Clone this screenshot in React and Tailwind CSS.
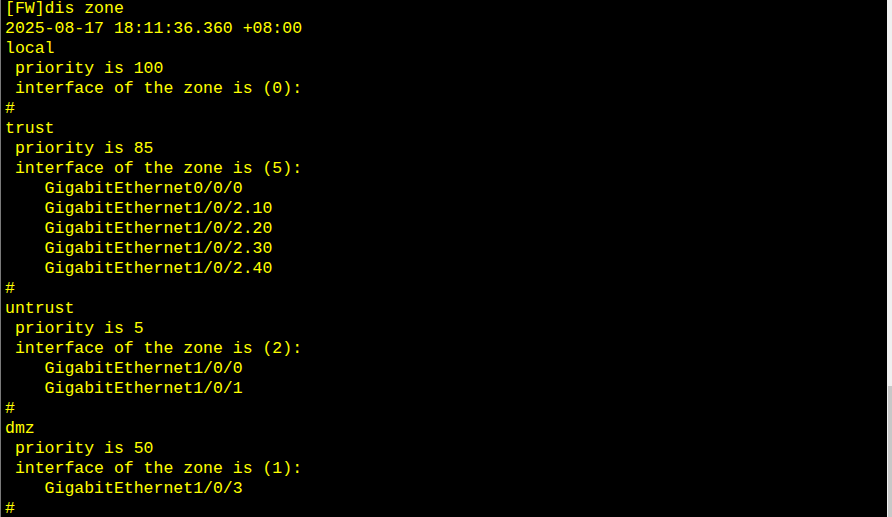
const lines = [
  "[FW]dis zone",
  "2025-08-17 18:11:36.360 +08:00",
  "local",
  " priority is 100",
  " interface of the zone is (0):",
  "#",
  "trust",
  " priority is 85",
  " interface of the zone is (5):",
  "    GigabitEthernet0/0/0",
  "    GigabitEthernet1/0/2.10",
  "    GigabitEthernet1/0/2.20",
  "    GigabitEthernet1/0/2.30",
  "    GigabitEthernet1/0/2.40",
  "#",
  "untrust",
  " priority is 5",
  " interface of the zone is (2):",
  "    GigabitEthernet1/0/0",
  "    GigabitEthernet1/0/1",
  "#",
  "dmz",
  " priority is 50",
  " interface of the zone is (1):",
  "    GigabitEthernet1/0/3",
  "#",
];

export default function App() {
  return (
    <div className="flex h-[517px] w-[892px] overflow-hidden bg-black">
      <div className="w-px shrink-0 bg-[#7a7a7a]" />
      <div className="flex-1 overflow-hidden bg-black pl-[4px]">
        <pre
          className="-mt-[1px] text-[16.5px] leading-[20px] text-[#ffff00]"
          style={{ fontFamily: '"Liberation Mono", "Courier New", monospace' }}
        >
          {lines.map((l, i) => (
            <div key={i} className="whitespace-pre">{l || " "}</div>
          ))}
        </pre>
      </div>
      <div className="flex w-[5px] shrink-0 flex-col bg-[#f0f0f0]">
        <div className="h-[386px] shrink-0" />
        <div className="flex-1 bg-[#c8c8c8] ml-px" />
      </div>
    </div>
  );
}
